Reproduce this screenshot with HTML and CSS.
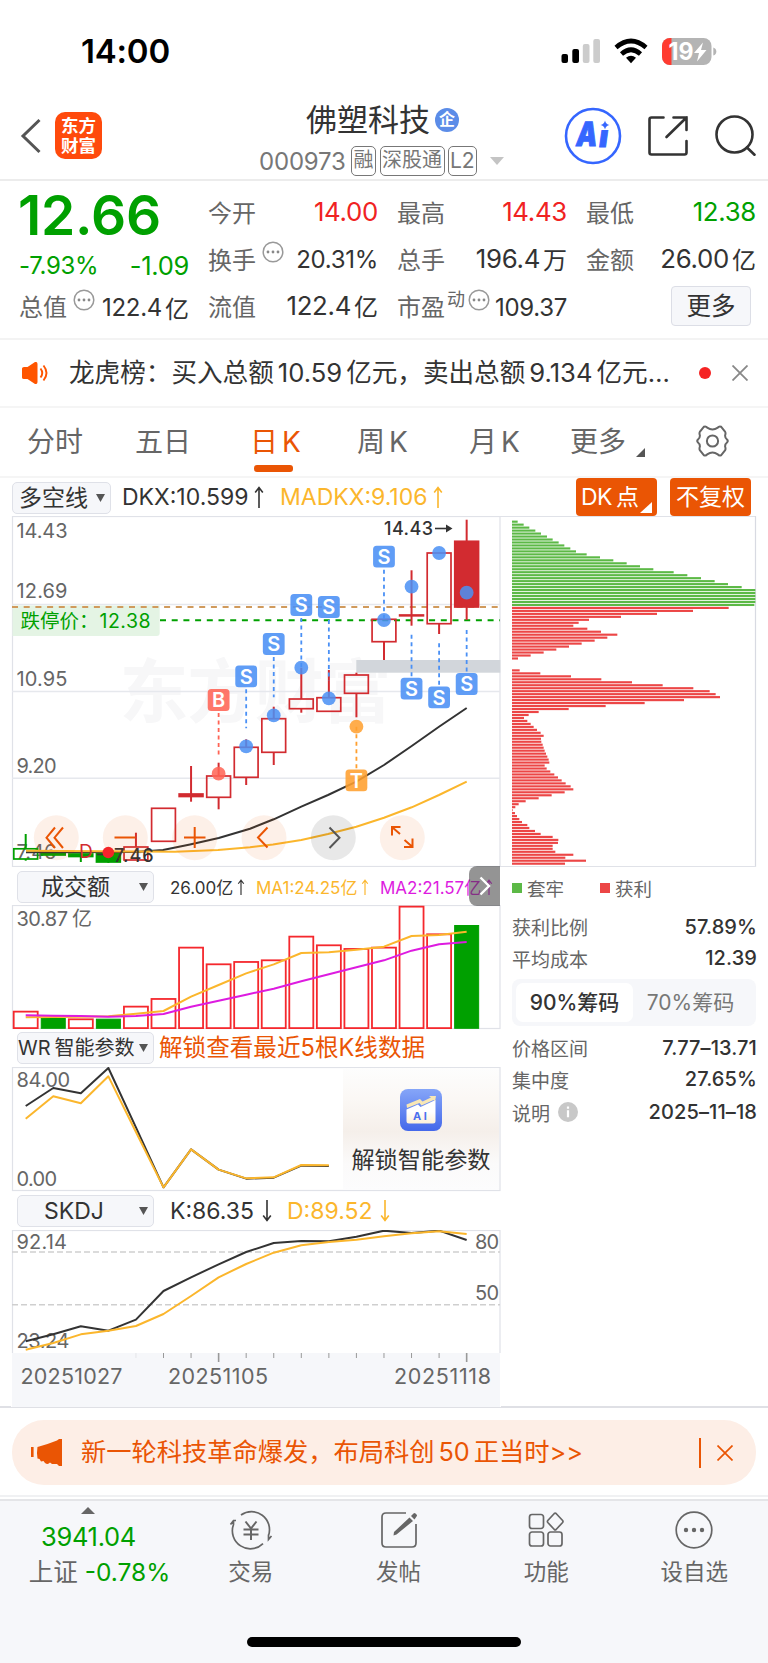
FILE: index.html
```html
<!DOCTYPE html>
<html lang="zh-CN">
<head>
<meta charset="utf-8">
<title>佛塑科技 000973</title>
<link rel="stylesheet" href="styles.css">
</head>
<body>
<div class="app">
  <div class="status">
    <span class="clock">14:00</span>
    <svg class="status-icons" width="158" height="30" viewBox="560 36 158 30">
      <rect x="561.500" y="54" width="6.500" height="9" rx="2"/><rect x="572.300" y="49" width="6.700" height="14" rx="2"/>
      <rect x="582.800" y="44" width="6.700" height="19" rx="2" fill="#ccc"/><rect x="593.300" y="39" width="6.700" height="24" rx="2" fill="#ccc"/>
      <g fill="none" stroke="#000" stroke-width="4.600"><path d="M616 47.500Q631 34.500 646 47.500"/><path d="M621.500 54Q631 45.500 640.500 54"/></g>
      <path d="M626 57.700Q631 54 636 57.700L631 63.300Z"/>
      <clipPath id="bat"><rect x="662" y="38" width="49.500" height="27" rx="8"/></clipPath>
      <g clip-path="url(#bat)"><rect x="662" y="38" width="50" height="27" fill="#b4b4b4"/><rect x="662" y="38" width="9.500" height="27" fill="#ff3b30"/></g>
      <path d="M713.300 47.500q3 1 3 4t-3 4z" fill="#b4b4b4"/>
      <text x="668.500" y="60" class="bat-num" textLength="25" lengthAdjust="spacingAndGlyphs">19</text>
      <path d="M703 42.500l-9 10.500h5l-2 8.500 9.500-11.500h-5.500z" fill="#fff"/>
    </svg>
  </div>
  <header class="head">
    <svg class="back" width="22" height="38" viewBox="0 0 22 38"><path d="M19.500 3L3 19l16.500 16" fill="none" stroke="#555" stroke-width="3"/></svg>
    <div class="logo"><span>东方</span><span>财富</span></div>
    <div class="title">
      <div class="name">佛塑科技<span class="ent">企</span></div>
      <div class="code"><b>000973</b><i>融</i><i>深股通</i><i>L2</i><svg width="14" height="8" viewBox="0 0 14 8"><path d="M0 0h14L7 8z" fill="#c4c4c4"/></svg></div>
    </div>
    <svg class="ai" width="58" height="58" viewBox="0 0 58 58"><circle cx="29" cy="29" r="27" fill="#fff" stroke="#3566ff" stroke-width="2.600"/>
      <g transform="translate(6 0) skewX(-8)"><text x="10.500" y="39.500" class="ailogo" textLength="21" lengthAdjust="spacingAndGlyphs">A</text><text x="33.700" y="40.500" class="ailogo sm">ı</text></g>
      <path d="M41 13.500q.8 3.700 4.500 4.500-3.700.8-4.500 4.500-.8-3.700-4.500-4.500 3.700-.8 4.500-4.500z" fill="#3566ff"/></svg>
    <svg class="share" width="42" height="42" viewBox="0 0 42 42"><g fill="none" stroke="#333" stroke-width="2.600" stroke-linecap="round"><path d="M16.500 2.500H4.500q-2 0-2 2v33q0 2 2 2h33q2 0 2-2V26"/><path d="M26.500 2.500h13V15M39.500 2.500L19.500 22"/></g></svg>
    <svg class="search" width="42" height="42" viewBox="0 0 42 42"><g fill="none" stroke="#333" stroke-width="2.600" stroke-linecap="round"><circle cx="20.500" cy="20.500" r="18"/><path d="M33 33.500l7.500 7.200"/></g></svg>
  </header>
  <section class="quote">
    <div class="col c1">
      <div class="price">12.66</div>
      <div class="chg"><span>-7.93%</span><span>-1.09</span></div>
      <div class="row r3"><label>总值</label><svg class="dots"><use href="#dots"/></svg><span class="v s">122.4<em>亿</em></span></div>
    </div>
    <div class="col"><div class="row"><label>今开</label><span class="v up">14.00</span></div><div class="row"><label>换手</label><svg class="dots"><use href="#dots"/></svg><span class="v s">20.31%</span></div><div class="row r3"><label>流值</label><span class="v">122.4<em>亿</em></span></div></div>
    <div class="col"><div class="row"><label>最高</label><span class="v up">14.43</span></div><div class="row"><label>总手</label><span class="v">196.4<em>万</em></span></div><div class="row r3"><label>市盈<sup>动</sup></label><svg class="dots"><use href="#dots"/></svg><span class="v s">109.37</span></div></div>
    <div class="col"><div class="row"><label>最低</label><span class="v down">12.38</span></div><div class="row"><label>金额</label><span class="v">26.00<em>亿</em></span></div><div class="row r3"><button class="more">更多</button></div></div>
    <svg class="defs"><symbol id="dots" viewBox="0 0 22 22"><circle cx="11" cy="11" r="9.800" fill="none" stroke="#999" stroke-width="1.500"/><g fill="#888"><circle cx="6" cy="11" r="1.400"/><circle cx="11" cy="11" r="1.400"/><circle cx="16" cy="11" r="1.400"/></g></symbol></svg>
  </section>
  <section class="news">
    <svg width="27" height="22" viewBox="0 0 27 22"><path d="M0 6.500q0-1.500 2-1.500h3.500L13 0q2.500-.5 2.500 2v18q0 2.500-2.500 2l-7.500-5H2q-2 0-2-1.500z" fill="#ff5500"/><g fill="none" stroke="#ff5500" stroke-width="1.900"><path d="M18.500 6.500q3.500 4.500 0 9M21.500 3.500q6 7.500 0 15"/></g></svg>
    <span class="news-t">龙虎榜：买入总额<u>10.59</u>亿元，卖出总额<u>9.134</u>亿元…</span>
    <i class="red"></i>
    <svg width="16" height="16" viewBox="0 0 16 16"><path d="M.5.5l15 15M15.500.5l-15 15" stroke="#888" stroke-width="1.800"/></svg>
  </section>
  <nav class="tabs">
    <span class="t1">分时</span><span class="t2">五日</span><span class="t3 on">日<u>K</u></span><span class="t4">周<u>K</u></span><span class="t5">月<u>K</u></span><span class="t6">更多<svg width="9" height="9" viewBox="0 0 9 9"><path d="M9 0v9H0z" fill="#555"/></svg></span>
    <svg class="gear" width="33" height="32" viewBox="-16.500 -16 33 32"><path d="M-8.500 -14.300Q-6.500 -15-5.300 -13.300Q0 -9.800 5.300 -13.300Q6.500 -15 8.500 -14.300L12.500 -9.500Q13.500 -8 12.600 -5.500Q12.500 -3 14.500 -1.500Q16 0 14.500 1.500Q12.500 3 12.600 5.500Q13.500 8 12.500 9.500L8.500 14.300Q6.500 15 5.300 13.300Q0 9.800 -5.300 13.300Q-6.500 15 -8.500 14.300L-12.500 9.500Q-13.500 8 -12.600 5.500Q-12.500 3 -14.500 1.500Q-16 0 -14.500 -1.500Q-12.500 -3 -12.600 -5.500Q-13.500 -8 -12.500 -9.500Z" fill="none" stroke="#666" stroke-width="2"/><circle r="5.600" fill="none" stroke="#666" stroke-width="2"/></svg>
  </nav>
  <div class="ind">
    <button class="sel s0"><span>多空线</span><svg class="tri"><use href="#tri"/></svg></button>
    <span class="dkx">DKX:10.599<svg class="ar"><use href="#ar"/></svg></span><span class="mad">MADKX:9.106<svg class="ar"><use href="#ar"/></svg></span>
    <button class="org dk"><u>DK</u>点<svg width="12" height="11" viewBox="0 0 12 11"><path d="M12 0v11H0z" fill="#fff"/></svg></button><button class="org">不复权</button>
  </div>
  <svg class="defs"><symbol id="tri" viewBox="0 0 9 8"><path d="M0 0h9L4.500 8z" fill="#555"/></symbol>
    <symbol id="ar" viewBox="0 0 10 22"><path d="M5 1v21M1.200 6.500L5 1.500l3.800 5" fill="none" stroke="currentColor" stroke-width="1.600"/></symbol></svg>
  <main class="main">
    <div class="left">
      <svg id="k" width="490" height="351" viewBox="11 516 490 351"></svg>
      <div class="sub v1"><button class="sel"><span>成交额</span><svg class="tri"><use href="#tri"/></svg></button>
        <span class="m0">26.00亿<svg class="ar"><use href="#ar"/></svg></span><span class="m1">MA1:24.25亿<svg class="ar"><use href="#ar"/></svg></span><span class="m2">MA2:21.57亿<svg class="ar"><use href="#ar"/></svg></span>
        <div class="next"><svg width="12" height="20" viewBox="0 0 12 20"><path d="M1.500 1.500L10 10l-8.500 8.500" fill="none" stroke="#fff" stroke-width="2.400"/></svg></div></div>
      <svg id="vol" width="490" height="125" viewBox="11 905 490 125"></svg>
      <div class="sub v2"><button class="sel wr"><span><u>WR</u>智能参数</span><svg class="tri"><use href="#tri"/></svg></button><span class="unlock">解锁查看最近5根K线数据</span></div>
      <div class="wrbox">
        <svg id="wr" width="490" height="125" viewBox="11 1067 490 125"></svg>
        <div class="lock">
          <svg width="42" height="42" viewBox="0 0 42 42"><defs><linearGradient id="g1" x2="0" y2="1"><stop stop-color="#86a6f8"/><stop offset="1" stop-color="#4468ea"/></linearGradient><linearGradient id="g2" x2="0" y2="1"><stop offset=".5" stop-color="#fff"/><stop offset="1" stop-color="#fdf0d8"/></linearGradient></defs><rect width="42" height="42" rx="8" fill="url(#g1)"/><path d="M6.500 20.500L18 15.500l2.500 2.500L35.500 11V32q0 2.500-2.500 2.500H9q-2.500 0-2.500-2.500z" fill="url(#g2)"/><path d="M6.500 15.500L20 10l2.500 2.500L31 8.500l-2-1.500h7l-1 5.500-1.500-1.500-12 5.500-2-2.500-12.500 5z" fill="#f8e7b4"/><text x="13" y="31" class="aitxt">A I</text></svg>
          <span>解锁智能参数</span>
        </div>
      </div>
      <div class="sub v3"><button class="sel sk"><span>SKDJ</span><svg class="tri"><use href="#tri"/></svg></button><span class="kk">K:86.35<svg class="ar dn"><use href="#ar"/></svg></span><span class="dd">D:89.52<svg class="ar dn"><use href="#ar"/></svg></span></div>
      <svg id="skdj" width="490" height="177" viewBox="11 1230 490 177"></svg>
    </div>
    <aside class="right">
      <svg id="chips" width="257" height="352" viewBox="500 516 257 352"></svg>
      <div class="legend"><i class="g"></i><span>套牢</span><i class="r"></i><span>获利</span></div>
      <div class="kv"><span>获利比例</span><b>57.89%</b></div>
      <div class="kv"><span>平均成本</span><b>12.39</b></div>
      <div class="seg"><b>90%筹码</b><span>70%筹码</span></div>
      <div class="kv"><span>价格区间</span><b>7.77–13.71</b></div>
      <div class="kv"><span>集中度</span><b>27.65%</b></div>
      <div class="kv last"><span>说明<svg width="20" height="20" viewBox="0 0 20 20"><circle cx="10" cy="10" r="10" fill="#c8c8c8"/><path d="M10 4.500v2.200M10 8.300v7" stroke="#fff" stroke-width="2.200"/></svg></span><b>2025–11–18</b></div>
    </aside>
  </main>
  <section class="promo-wrap"><div class="promo">
    <svg width="31" height="27" viewBox="0 0 31 27"><path d="M1.300 8v10" stroke="#ea5504" stroke-width="2.600"/><path d="M6.500 8Q16 5.500 26 1.500L28 0h3v27h-3l-2-2h-5l-2-1.500q-2 2.500-5 .5l-1.500-2-2.500.500-1.500-2.500-2-.5q-1-6 0-12z" fill="#ea5504"/></svg>
    <span>新一轮科技革命爆发，布局科创<u>50</u>正当时&gt;&gt;</span><i></i>
    <svg width="16" height="16" viewBox="0 0 16 16"><path d="M.5.5l15 15M15.500.5l-15 15" stroke="#ea5504" stroke-width="1.700"/></svg>
  </div></section>
  <footer class="nav">
    <div class="idx"><svg width="14" height="7" viewBox="0 0 14 7"><path d="M7 0l7 7H0z" fill="#666"/></svg><span class="n">3941.04</span><span class="p">上证<b>-0.78%</b></span></div>
    <div class="it"><svg viewBox="-22 -20 44 40"><g><path d="M-10 -15A18 18 0 0 1 17.500 5.500V9M12 13.600A18 18 0 0 1 -17.500 -5.500V-9M-20.500 -5.500L-17.500 -9.500H-15M20.500 6L17.500 9.500V4.500"/><path d="M-5.500 -8.500L0 -1.500L5.500 -8.500M0 -1.500V10M-7.500 -.500H7.500M-7.500 4.500H7.500" stroke-width="2"/></g></svg><span>交易</span></div>
    <div class="it"><svg viewBox="-22 -20 44 40"><g><path d="M7 -17H-13Q-17 -17 -17 -13V13Q-17 17 -13 17H13Q17 17 17 13V-6"/></g><path d="M10.500 -12.500l3.500 3.500L-2.500 4.500l-3 1 .5-3.500zM12 -14l2.500-2.500q1-1 2 0l1 1q1 1 0 2L15.500 -10.500z" fill="#666"/></svg><span>发帖</span></div>
    <div class="it"><svg viewBox="-22 -20 44 40"><g><rect x="-16.500" y="-15.500" width="14" height="14" rx="2.500"/><rect x="-16.500" y="2" width="14" height="14" rx="2.500"/><rect x="2" y="2" width="14" height="14" rx="2.500"/><path d="M8.300 -16.500q.9-.8 1.800 0l6.500 7q.8 1 0 2l-6.500 7q-.9.800-1.800 0l-6.500-7q-.8-1 0-2z"/></g></svg><span>功能</span></div>
    <div class="it"><svg viewBox="-22 -20 44 40"><g><circle r="17.800"/></g><g class="f"><circle cx="-8" r="2.200"/><circle r="2.200"/><circle cx="8" r="2.200"/></g></svg><span>设自选</span></div>
  </footer>
  <div class="home"></div>
</div>
<script src="charts.js"></script>
</body>
</html>
```
FILE: styles.css
```css
*{box-sizing:border-box}
body{margin:0;background:#fff;font-family:Inter,"Noto Sans CJK SC",sans-serif;color:#333;font-weight:400}
button{font:inherit;color:inherit;margin:0;padding:0}
i,em{font-style:normal}
u{text-decoration:none}
svg{display:block;flex:none}
.defs{position:absolute;width:0;height:0}
.app{width:768px;height:1663px;display:flex;flex-direction:column;overflow:hidden;white-space:nowrap}
.status{height:94px;padding:8px 50px 0 81px;display:flex;justify-content:space-between;align-items:center;flex:none}
.clock{font-weight:600;font-size:33px;color:#000;letter-spacing:-.2px}
.bat-num{font:700 24px Inter,sans-serif;fill:#fff}
.head{height:87px;flex:none;display:flex;border-bottom:2px solid #ececec;padding-left:20px}
.back{margin-top:23px}
.logo{width:47px;height:47px;margin:18px 0 0 13px;border-radius:10px;background:#ff4a0c;color:#fff;font-weight:700;font-size:17.500px;line-height:19.500px;display:flex;flex-direction:column;align-items:center;justify-content:center}
.title{width:260px;margin:5px 0 0 157px}
.name{font-size:31px;line-height:42px;height:42px;margin-left:47px;display:flex;align-items:center}
.ent{width:24px;height:24px;border-radius:12px;background:#5b8ce8;color:#fff;font-size:16px;line-height:23px;text-align:center;font-weight:700;margin:-1px 0 0 5px}
.code{display:flex;align-items:center;height:32px;margin-top:4px;color:#777}
.code b{font-weight:400;font-size:24px;letter-spacing:-.2px;width:92px}
.code i{border:1.500px solid #777;border-radius:5px;height:30px;line-height:27px;font-size:20px;padding:0 1.500px;margin-right:3.500px}
.code i:nth-of-type(3){font-size:21px;padding:0 1px}
.code svg{margin-left:10px}
.ai{margin:13px 0 0 45px}
.ailogo{font:900 33.500px Inter,sans-serif;fill:#3566ff;stroke:#3566ff;stroke-width:1}
.sm{font-size:30px}
.share{margin:21px 0 0 25px}
.search{margin:20px 0 0 25px}
.quote{height:159px;flex:none;display:flex;gap:19px;padding:7px 0 0 19px;border-bottom:2px solid #f3f3f3}
.col{width:170px}
.c1 .price{margin-left:-1px}
.row{display:flex;align-items:center;height:46px;font-size:24px}
.row+.row{height:48px}
.col .r3{height:47px}
.row label{color:#666}
.v{margin-left:auto;font-size:25.800px;letter-spacing:-.3px;display:flex;align-items:center}
.v.s{font-size:24px;margin-top:3px}
.v em{font-size:24px;margin-left:3px;letter-spacing:0}
.up{color:#f02222}.down{color:#00a000}
.dots{width:22px;height:22px;margin:-12px 0 0 6px}
label+.dots{margin-left:6px}
label sup{font-size:18px;line-height:0;vertical-align:10px;margin-left:2px;margin-right:-3px}
.price{font-size:55px;font-weight:600;color:#00a000;height:54px;line-height:54px;letter-spacing:-.2px}
.chg{display:flex;justify-content:space-between;height:40px;line-height:47px;font-size:24px;color:#00a000;letter-spacing:-.3px}
.chg span+span{font-size:25.500px}
.more{width:80px;height:40px;border:1.500px solid #dcdee6;border-radius:4px;background:#f6f7fa;font-size:24.500px;line-height:34px;margin-left:85px}
.news{height:68px;flex:none;display:flex;align-items:center;padding-left:22px;border-bottom:2px solid #f5f5f5}
.news-t{font-size:25.600px;margin-left:20px;width:630px;line-height:66px}
.news-t u{margin:0 4px;letter-spacing:0}
.red{width:12px;height:12px;border-radius:6px;background:#f52323;margin-right:21px}
.tabs{height:70px;flex:none;display:flex;padding-left:27px;font-size:28px;line-height:69px;color:#666;border-bottom:2px solid #f5f5f5}
.tabs span{flex:none;position:relative;width:107px}
.tabs u{margin-left:4px}
.tabs .t1{width:108px}.tabs .t2{width:115px}.tabs .t3{width:107px}.tabs .t4{width:112px}.tabs .t5{width:101px}.tabs .t6{width:127px}
.t6 svg{position:absolute;left:66px;top:40px}
.on{color:#ea5504}
.on::after{content:"";position:absolute;left:4px;top:57px;width:39px;height:7px;border-radius:3px;background:#ea5504}
.gear{margin:17px 0 0 -1px}
.ind{height:38px;flex:none;display:flex;padding:0 0 0 12px;align-items:center;line-height:38px;font-size:23px}
.sel{border:1.500px solid #dfe1e8;border-radius:5px;background:#f6f7fa;width:137px;height:32px;display:flex;align-items:center;flex:none;font-size:23px;line-height:28px;position:relative;padding-left:23px;color:#333}
.s0{width:99px;padding-left:6px;margin-top:2px}
.tri{position:absolute;right:5px;top:11px;width:9px;height:8px}
.ar{display:inline-block;width:10px;height:22px;vertical-align:-3px;margin-left:6px}
.dkx{margin-left:11px;width:158px}.mad{color:#fbb62c;width:295px}
.org{border:0;background:#ea5504;color:#fff;border-radius:4px;height:38px;width:81px;font-size:23px;margin-right:13px;position:relative;line-height:38px;flex:none;align-self:flex-start}
.dk{text-align:left;padding-left:5px;margin-left:1px}.dk u{margin-right:4px;letter-spacing:-.5px}
.dk svg{position:absolute;right:5px;bottom:3px}
.main{height:892px;flex:none;display:flex;border-bottom:2px solid #dfe0e5}
.left{width:489px;margin-left:11px;flex:none}
.left>svg{width:490px}
.sub{display:flex;align-items:center;padding-left:6px;position:relative}
.v1{height:38px;font-size:17px;padding-top:1px}
.v1 .ar{width:8px;height:16px;vertical-align:-1px;margin-left:4px}
.m0{margin-left:16px;width:86px}.m1{color:#fbb62c;width:124px}.m2{color:#dd1be0}
.next{position:absolute;right:0;top:-1px;width:31px;height:40px;background:rgba(60,60,60,.55);border-radius:8px 0 0 8px;display:flex;align-items:center;justify-content:center}
.v2{height:37px;padding-bottom:1px}
.wr{font-size:20px;padding-left:0}
.wr u{margin-right:4px;font-size:20px}
.unlock{font-size:23.600px;line-height:30px;color:#ea5504;margin-left:5px}
.wrbox{height:125px;position:relative}
.lock{position:absolute;left:332px;top:1px;width:156px;height:122px;background:linear-gradient(#fdfdfd,#fbf8f5 25%,#f5efea 52%,#fbfafa 78%,#fcfcfd);display:flex;flex-direction:column;align-items:center;padding-top:21px;font-size:23.200px}
.lock span{line-height:36px;margin-top:11px}
.aitxt{font:700 11px Inter,sans-serif;fill:#4b6fee}
.v3{height:38px;font-size:23px}
.sk{padding-left:26px}
.kk{margin-left:16px;width:117px}.dd{color:#fbb62c}
.dn{transform:rotate(180deg);margin-left:8px}
.right{width:257px}
.legend{display:flex;align-items:center;height:39px;padding-left:12px;font-size:18.500px;color:#666}
.legend i{width:10px;height:10px;background:#5cb946;margin-right:5px}
.legend .r{background:#ec4646;margin-left:36px}
.kv{display:flex;justify-content:space-between;align-items:center;height:31.500px;padding:0 0 0 12px;font-size:19px;color:#666}
.legend+.kv{margin-top:4px}
.kv b{font-size:20px;font-weight:500;color:#333;letter-spacing:.1px}
.kv span{display:flex;align-items:center}
.kv svg{margin-left:8px}
.seg{margin:5px 0 6px 12px;height:47px;width:244px;background:#f6f7fa;border-radius:8px;padding:4px;display:flex;font-size:21px;line-height:39px;text-align:center;color:#777}
.seg b{width:117px;background:#fff;border-radius:7px;color:#333;font-weight:500}
.seg span{width:115px}
.last{height:34px}
.promo-wrap{height:93px;flex:none;padding:12px 12px 0;border-bottom:2px solid #e4e5e8;position:relative}
.promo-wrap::after{content:"";position:absolute;left:0;right:0;bottom:2px;height:2px;background:#f0f1f3}
.promo{height:65px;border-radius:32px;background:#fdeee6;display:flex;align-items:center;padding-left:19px;color:#ea5504;font-size:25.250px;line-height:60px}
.promo span{margin:-1px 0 0 19px;width:618px}
.promo u{margin:0 4px}
.promo i{width:1.500px;height:30px;background:#ea5504;margin-right:16px}
.nav{height:136px;flex:none;background:#f6f7fa;display:flex;color:#666;padding-top:6px}
.idx{width:177px;display:flex;flex-direction:column;align-items:center}
.idx .n{font-size:25.500px;color:#00a000;line-height:30px;margin-top:8px;letter-spacing:-.3px}
.idx .p{font-size:24.500px;line-height:38px;margin:1px 0 0 22px}
.idx b{font-weight:400;color:#00a000;margin-left:7px}
.it{width:147.800px;display:flex;flex-direction:column;align-items:center;font-size:22.500px;padding-top:3px}
.it svg{width:44px;height:40px}
.it g{fill:none;stroke:#666;stroke-width:1.700}
.it .f{fill:#666;stroke:none}
.it span{line-height:36px;margin-top:4px}
.home{flex:1;background:#f6f7fa}
.home::after{content:"";display:block;width:274px;height:10px;border-radius:5px;background:#000;margin:0 0 0 247px}
.lab{font:20px Inter,"Noto Sans CJK SC",sans-serif;fill:#666}
.date{font:21.500px Inter,sans-serif;fill:#666}
.mk{font:600 20px Inter,sans-serif;fill:#fff;text-anchor:middle}
.tag{font:19.500px Inter,"Noto Sans CJK SC",sans-serif;fill:#00a000}
.hi{font:500 18px Inter,sans-serif;fill:#333}
.dl{font:19px Inter,sans-serif;fill:#d22b30}
.wm{font:700 69px "Noto Sans CJK SC",sans-serif;fill:#f7f7f8}
```
FILE: charts.js
```js
const X = i => 25.7 + i * 27.56;
const RED = '#d22b30', GRN = '#00a000', YEL = '#fbb62c', BLK = '#333', BLU = '#4a90f5', ORG = '#ff9f2e', PNK = '#ff6455';
const rect = (x, y, w, h, a) => `<rect x="${x}" y="${y}" width="${w}" height="${h}" ${a}/>`;
const line = (x1, y1, x2, y2, c, w = 1.5, a = '') => `<path d="M${x1} ${y1}L${x2} ${y2}" stroke="${c}" stroke-width="${w}" fill="none" ${a}/>`;
const poly = (pts, c, w = 2) => `<polyline points="${pts.map(p => p.join()).join(' ')}" fill="none" stroke="${c}" stroke-width="${w}" stroke-linejoin="round"/>`;
const series = (ys, base, c) => poly(ys.map((y, i) => [X(i), base + y / 3]), c);
const text = (x, y, cls, len, s) => `<text x="${x}" y="${y}" class="${cls}" ${len ? `textLength="${len}"` : ''}>${s}</text>`;
const frame = (y, h) => rect(12.5, y, 487.5, h, 'fill="none" stroke="#e0e2e8" stroke-width="1.2"');

// Candles: [high, top, bottom, low, kind]; kind r = hollow red, R = solid red, g = hollow green, G = solid green
const candles = [
  [834,848.8,859,860.7,'g'],[852,852.5,855,856,'G'],[853,854,856.5,862,'G'],[849,852.5,862,863,'G'],[832.7,847,860,860,'r'],
  [808.3,808.3,841.3,841.3,'r'],[766,794,796.5,801.7,'R'],[762.7,776,797.3,809.3,'r'],[739.3,747.3,777.3,785,'r'],[706.7,718.7,752.3,765,'r'],
  [667.7,699,708.7,712.7,'r'],[670,697.7,711.3,711.3,'r'],[672.7,675,693.3,717.3,'r'],[619.3,619.3,641.7,660,'r'],
  [570.3,615,615.8,625.7,'r'],[553,553,623.7,634,'r'],[519.7,541.3,607,620,'R']];
// Signals: [index, dot y, badge y, letter, color]
const marks = [[7,773.7,700,'B',PNK],[8,746.3,676.3,'S',BLU],[9,715.3,644,'S',BLU],[10,667.7,605,'S',BLU],[11,698.3,607,'S',BLU],
  [12,726.7,780.3,'T',ORG],[13,620,556.7,'S',BLU],[14,586.7,688.7,'S',BLU],[15,553,697.3,'S',BLU],[16,592.7,684,'S',BLU]];

let k = text(119.5, 717, 'wm', 272, '东方财富') + frame(516.5, 350);
for (const y of [604.5, 691.5, 778.3]) k += line(12, y, 500, y, '#e6e8ed', 1.5);
k += rect(356.3, 660, 144, 12.7, 'fill="#d2d6db"');
k += '<path d="M12.500 605.500H159.700V633Q159.700 636 156.700 636H12.500Z" fill="#e4f4e4"/>';
k += line(12, 607, 500, 607, '#d09a5c', 2, 'stroke-dasharray="6 5.7"') + line(160, 620.3, 500, 620.3, GRN, 2, 'stroke-dasharray="6 5.7"');
k += text(20.5, 628, 'tag', 0, '跌停价：') + text(99.5, 628, 'tag', 51, '12.38');
for (const [s, y] of [['14.43',538],['12.69',598],['10.95',686],['9.20',773],['7.46',859]]) k += text(16.500, y, 'lab', s.length > 4 ? 51 : 40, s);
candles.forEach(([h, t, b, l, kind], i) => {
  const c = kind.toLowerCase() === 'r' ? RED : GRN, x = X(i), solid = kind < 'a';
  k += line(x, h, x, t, c, 2) + line(x, b, x, l, c, 2);
  k += rect(x - 11.9, t, 23.8, b - t, `fill="${solid ? c : 'none'}" stroke="${c}" stroke-width="1.7"`);
});
k += poly([[26,852.3],[136,852],[163,850],[190,844.500],[218.7,838],[250,828.7],[273.7,819.3],[301.3,806.7],[328,795],[356.3,781.7],[384,765],[411.7,746],[439,726.7],[466.7,708]], BLK);
k += poly([[26,850.8],[100,851.3],[175,851.7],[218,850],[250,847.3],[273,844.500],[301.3,840],[328,834],[356.3,826.7],[384,817.7],[411.7,807.3],[439,795],[466.7,781.7]], YEL);
for (const [i, d, b, s, c] of marks) {
  const x = X(i), up = b < d;
  k += line(x, up ? b + 13 : (s === 'T' ? d : b - 54), x, up ? d - (i > 9 && i !== 11 ? 0 : 18) : b - 11, c, 1.8, 'stroke-dasharray="4 3.500"');
  k += `<circle cx="${x}" cy="${d}" r="6.900" fill="${c}" opacity=".86"/>` + rect(x - 10.9, b - 10.9, 21.8, 21.8, `rx="3.500" fill="${c}" opacity=".88"`) + text(x, b + 7.300, 'mk', 0, s);
}
k += text(384, 535, 'hi', 49, '14.43') + line(435, 528.5, 450, 528.5, BLK, 1.6) + '<path d="M446 524.500L452.500 528.500L446 532.500z" fill="#333"/>';
k += text(79, 858.2, 'dl', 0, 'D');
k += text(114, 861.7, 'hi', 39.500, '7.46') + line(97, 854.5, 112, 854.5, BLK, 1.6) + '<circle cx="108.300" cy="852.500" r="5.800" fill="#f5222d"/>';
[56.3,125.3,194.7,264,333.3,402.3].forEach((x, i) => k += `<circle cx="${x}" cy="837.700" r="22.500" fill="${i === 4 ? 'rgba(0,0,0,.09)' : 'rgba(234,85,4,.09)'}"/>`);
k += `<g fill="none" stroke="#ea5504" stroke-width="2"><path d="M55 827.500L46.500 837.700L55 848M63 827.500L54.500 837.700L63 848M114.500 837.500H135.500M184 837.500H205.500M194.700 827V848M267.500 827.500L258 837.500L267.500 847.500"/>
<path d="M392 835.500V827H400.500M392.500 827.500L400 834M412.500 838.500V847H404M412 846.500L404.500 840"/></g><path d="M329.500 827.500L339.500 837.700L329.500 848" fill="none" stroke="#555" stroke-width="2"/>`;
document.getElementById('k').innerHTML = k;

const vol = [439,459,462,461,424,401,247,297,290,285,214,240,251,247,124,207,180];
let v = frame(905.5, 123);
vol.forEach((z, i) => {
  const y = 865 + z / 3, g = [1,3,16].includes(i);
  v += rect(X(i) - 12, y + (g ? .5 : .3), 24, 1027.8 - y, g ? `fill="${GRN}" stroke="${GRN}"` : 'fill="none" stroke="#f5282d" stroke-width="1.8"');
});
v += text(16.500, 925.5, 'lab', 51.500, '30.87') + text(72, 925.5, 'lab', 0, '亿');
v += series([457,456,455,454,446,438,395,360,325,298,264,262,254,245,213,210,200], 865, YEL);
v += series([451,452,453,455,453,447,425,407,389,371,349,328,307,286,257,238,231], 865, '#dd1be0');
document.getElementById('vol').innerHTML = v;

document.getElementById('wr').innerHTML = frame(1067.5, 123) + text(16.500, 1086.5, 'lab', 53.500, '84.00') + text(16.500, 1186, 'lab', 40.500, '0.00') +
  series([213,159,175,99,277,457,343,404,431,428,392,393], 1035, BLK) + series([251,184,205,124,291,457,343,404,430,427,390,391], 1035, YEL);

let s = frame(1230.5, 123.5) + rect(11, 1353, 490, 54, 'fill="#fff"') + rect(12, 1353, 488, 54, 'fill="#f6f7fa"');
for (const y of [1252, 1304.7]) s += line(12, y, 500, y, '#cfcfcf', 1.6, 'stroke-dasharray="6 3"');
s += text(16.500, 1249, 'lab', 50.500, '92.14') + text(16.500, 1348, 'lab', 53, '23.24') + text(475, 1249, 'lab', 24, '80') + text(475, 1300, 'lab', 24, '50');
s += series([454,433,409,422,389,303,262,223,186,159,153,154,140,122,129,122,150], 1190, BLK);
s += series([479,459,433,422,408,372,318,262,222,188,166,156,149,139,130,124,132], 1190, YEL);
for (let i = 4; i < 17; i++) s += line(X(i), 1353, X(i), i % 9 === 7 ? 1362 : 1358, i === 4 ? '#e4e5e8' : '#999', i % 9 === 7 ? 1.6 : 1);
s += text(20.500, 1383.5, 'date', 102, '20251027') + text(168, 1383.5, 'date', 100, '20251105') + text(394, 1383.5, 'date', 97, '20251118');
document.getElementById('skdj').innerHTML = s;

const trapped = [53,71,88,106,123,141,158,176,193,211,228,260,300,340,380,420,460,521,562,603,644,684,725,766,766,766,766,766,763];
const profit = [686,579,471,363,267,236,220,262,303,352,322,284,245,207,169,131,92,54,0,0,0,59,121,213,304,396,488,580,629,647,660,552,434,317,206,116,86,72,82,92,101,111,122,131,123,124,128,131,134,138,142,146,148,134,140,151,163,174,185,197,212,220,194,155,116,77,56,46,38,45,51,58,66,82,88,105,122,158,175,174,158,158,166,220,196,258,195];
let c = line(500, 516.5, 756, 516.5, '#e0e2e8', 1.2) + line(755.5, 516, 755.5, 867, '#d8dae2', 1.2) + line(500, 866.5, 756, 866.5, '#e0e2e8', 1.2);
trapped.concat(profit).forEach((z, i) => { if (z) c += rect(512, 520.6 + i * 2.974, (z - 36) / 3, 2.15, `fill="${i < trapped.length ? '#5cb946' : '#ec4646'}"`); });
document.getElementById('chips').innerHTML = c;
```
